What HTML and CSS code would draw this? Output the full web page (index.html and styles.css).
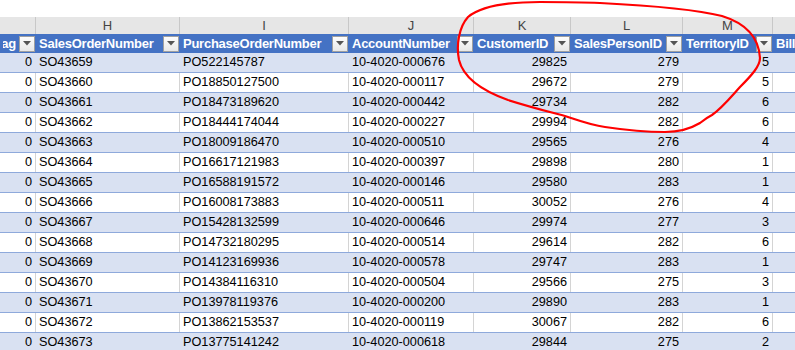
FILE: index.html
```html
<!DOCTYPE html>
<html lang="en">
<head>
    <meta charset="UTF-8">
    <title>SalesOrderHeader</title>
    <link rel="stylesheet" href="styles.css">
</head>
<body>
    <div class="sheet">
        <div class="row letters">
            <div class="cell"></div>
            <div class="cell">H</div>
            <div class="cell">I</div>
            <div class="cell">J</div>
            <div class="cell">K</div>
            <div class="cell">L</div>
            <div class="cell">M</div>
            <div class="cell"></div>
        </div>

        <div class="row head">
            <div class="cell"><span class="label tail">OnlineOrderFlag</span><span class="filter"><svg width="8" height="5" viewBox="0 0 8 5"><polygon points="0,0 8,0 4,4.5" fill="#555"/></svg></span></div>
            <div class="cell"><span class="label">SalesOrderNumber</span><span class="filter"><svg width="8" height="5" viewBox="0 0 8 5"><polygon points="0,0 8,0 4,4.5" fill="#555"/></svg></span></div>
            <div class="cell"><span class="label">PurchaseOrderNumber</span><span class="filter"><svg width="8" height="5" viewBox="0 0 8 5"><polygon points="0,0 8,0 4,4.5" fill="#555"/></svg></span></div>
            <div class="cell"><span class="label">AccountNumber</span><span class="filter"><svg width="8" height="5" viewBox="0 0 8 5"><polygon points="0,0 8,0 4,4.5" fill="#555"/></svg></span></div>
            <div class="cell"><span class="label">CustomerID</span><span class="filter"><svg width="8" height="5" viewBox="0 0 8 5"><polygon points="0,0 8,0 4,4.5" fill="#555"/></svg></span></div>
            <div class="cell"><span class="label">SalesPersonID</span><span class="filter"><svg width="8" height="5" viewBox="0 0 8 5"><polygon points="0,0 8,0 4,4.5" fill="#555"/></svg></span></div>
            <div class="cell"><span class="label">TerritoryID</span><span class="filter"><svg width="8" height="5" viewBox="0 0 8 5"><polygon points="0,0 8,0 4,4.5" fill="#555"/></svg></span></div>
            <div class="cell"><span class="label">Bill</span></div>
        </div>

        <div class="row data band"><div class="cell num">0</div><div class="cell txt">SO43659</div><div class="cell txt">PO522145787</div><div class="cell txt">10-4020-000676</div><div class="cell num">29825</div><div class="cell num">279</div><div class="cell num">5</div><div class="cell"></div></div>
        <div class="row data"><div class="cell num">0</div><div class="cell txt">SO43660</div><div class="cell txt">PO18850127500</div><div class="cell txt">10-4020-000117</div><div class="cell num">29672</div><div class="cell num">279</div><div class="cell num">5</div><div class="cell"></div></div>
        <div class="row data band"><div class="cell num">0</div><div class="cell txt">SO43661</div><div class="cell txt">PO18473189620</div><div class="cell txt">10-4020-000442</div><div class="cell num">29734</div><div class="cell num">282</div><div class="cell num">6</div><div class="cell"></div></div>
        <div class="row data"><div class="cell num">0</div><div class="cell txt">SO43662</div><div class="cell txt">PO18444174044</div><div class="cell txt">10-4020-000227</div><div class="cell num">29994</div><div class="cell num">282</div><div class="cell num">6</div><div class="cell"></div></div>
        <div class="row data band"><div class="cell num">0</div><div class="cell txt">SO43663</div><div class="cell txt">PO18009186470</div><div class="cell txt">10-4020-000510</div><div class="cell num">29565</div><div class="cell num">276</div><div class="cell num">4</div><div class="cell"></div></div>
        <div class="row data"><div class="cell num">0</div><div class="cell txt">SO43664</div><div class="cell txt">PO16617121983</div><div class="cell txt">10-4020-000397</div><div class="cell num">29898</div><div class="cell num">280</div><div class="cell num">1</div><div class="cell"></div></div>
        <div class="row data band"><div class="cell num">0</div><div class="cell txt">SO43665</div><div class="cell txt">PO16588191572</div><div class="cell txt">10-4020-000146</div><div class="cell num">29580</div><div class="cell num">283</div><div class="cell num">1</div><div class="cell"></div></div>
        <div class="row data"><div class="cell num">0</div><div class="cell txt">SO43666</div><div class="cell txt">PO16008173883</div><div class="cell txt">10-4020-000511</div><div class="cell num">30052</div><div class="cell num">276</div><div class="cell num">4</div><div class="cell"></div></div>
        <div class="row data band"><div class="cell num">0</div><div class="cell txt">SO43667</div><div class="cell txt">PO15428132599</div><div class="cell txt">10-4020-000646</div><div class="cell num">29974</div><div class="cell num">277</div><div class="cell num">3</div><div class="cell"></div></div>
        <div class="row data"><div class="cell num">0</div><div class="cell txt">SO43668</div><div class="cell txt">PO14732180295</div><div class="cell txt">10-4020-000514</div><div class="cell num">29614</div><div class="cell num">282</div><div class="cell num">6</div><div class="cell"></div></div>
        <div class="row data band"><div class="cell num">0</div><div class="cell txt">SO43669</div><div class="cell txt">PO14123169936</div><div class="cell txt">10-4020-000578</div><div class="cell num">29747</div><div class="cell num">283</div><div class="cell num">1</div><div class="cell"></div></div>
        <div class="row data"><div class="cell num">0</div><div class="cell txt">SO43670</div><div class="cell txt">PO14384116310</div><div class="cell txt">10-4020-000504</div><div class="cell num">29566</div><div class="cell num">275</div><div class="cell num">3</div><div class="cell"></div></div>
        <div class="row data band"><div class="cell num">0</div><div class="cell txt">SO43671</div><div class="cell txt">PO13978119376</div><div class="cell txt">10-4020-000200</div><div class="cell num">29890</div><div class="cell num">283</div><div class="cell num">1</div><div class="cell"></div></div>
        <div class="row data"><div class="cell num">0</div><div class="cell txt">SO43672</div><div class="cell txt">PO13862153537</div><div class="cell txt">10-4020-000119</div><div class="cell num">30067</div><div class="cell num">282</div><div class="cell num">6</div><div class="cell"></div></div>
        <div class="row data band"><div class="cell num">0</div><div class="cell txt">SO43673</div><div class="cell txt">PO13775141242</div><div class="cell txt">10-4020-000618</div><div class="cell num">29844</div><div class="cell num">275</div><div class="cell num">2</div><div class="cell"></div></div>

        <!-- hand drawn circle around the ID columns -->
        <svg class="scribble" width="795" height="350" viewBox="0 0 795 350">
            <path d="M 540 2 C 505 2 480 7 468 17 C 459 27 456 45 459 60 C 463 76 480 90 508 100 C 530 107 550 112 565 116 C 580 121 590 125 605 127 C 625 130 645 132 665 132 C 680 132 690 129 700 123 C 705 119 708 117 712 115 C 722 108 730 98 740 87 C 752 75 760 66 760 58 C 759 40 748 24 722 16 C 690 8 640 5 600 3 C 578 2 558 2 540 2 Z" fill="none" stroke="#ff0000" stroke-width="2.2" stroke-linejoin="round"/>
        </svg>
    </div>
</body>
</html>
```

FILE: styles.css
```css
body {
    margin: 0;
    background-color: #fff;
    font-family: "Liberation Sans", Arial, sans-serif;
    font-size: 13px;
    color: #000;
    overflow: hidden;
}

.sheet {
    position: relative;
    width: 795px;
    height: 350px;
    padding-top: 17px;
    box-sizing: border-box;
    overflow: hidden;
}

.row {
    display: grid;
    grid-template-columns: 36px 144px 169px 125px 97px 112px 90px 40px;
}

.cell {
    box-sizing: border-box;
    overflow: hidden;
    white-space: nowrap;
}

/* column letters */
.letters {
    height: 17px;
    background-color: #e6e6e6;
    color: #444;
}

.letters .cell {
    text-align: center;
    line-height: 17px;
    border-right: 1px solid #c8c8c8;
}

/* table header */
.head {
    height: 19px;
    background-color: #4472c4;
    color: #fff;
    font-weight: bold;
    letter-spacing: -0.25px;
}

.head .cell {
    display: flex;
    align-items: center;
    gap: 3px;
    padding: 0 1px 0 3px;
}

.label {
    flex: 1;
    min-width: 0;
    overflow: hidden;
}

.label.tail {
    display: flex;
    justify-content: flex-end;
}

.filter {
    flex: none;
    width: 16px;
    height: 16px;
    box-sizing: border-box;
    border: 1px solid #a0a0a0;
    background: linear-gradient(#fdfdfd, #e8e8e8);
    display: flex;
    align-items: center;
    justify-content: center;
}

/* data rows */
.data {
    height: 20px;
    box-sizing: border-box;
    border-bottom: 1px solid #8ea9db;
    line-height: 19px;
    font-size: 12.7px;
}

.data .cell {
    border-right: 1px solid #d4d4d4;
}

.data.band {
    background-color: #d9e1f2;
}

.data.band .cell {
    border-right-color: transparent;
}

.txt { padding-left: 3px; }
.num { text-align: right; padding-right: 3px; }

.scribble {
    position: absolute;
    top: 0;
    left: 0;
    pointer-events: none;
}
```
